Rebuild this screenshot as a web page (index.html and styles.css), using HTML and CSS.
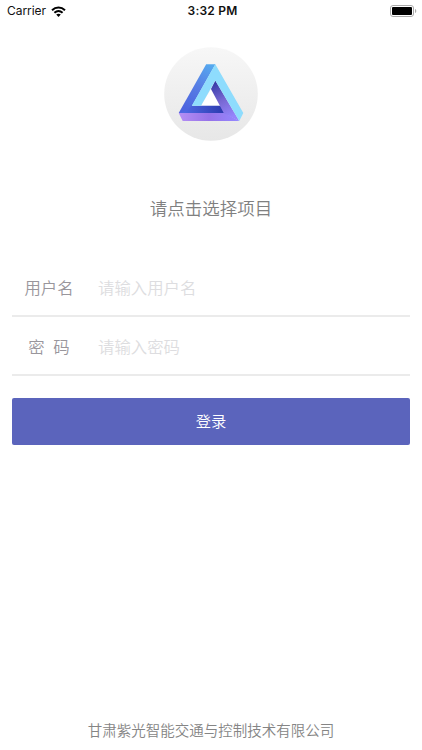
FILE: index.html
```html
<!DOCTYPE html>
<html lang="zh-CN">
<head>
<meta charset="utf-8">
<meta name="viewport" content="width=device-width, initial-scale=1">
<title>登录</title>
<link rel="stylesheet" href="styles.css">
</head>
<body>
<div class="screen">
  <header class="status">
    <div class="carrier"><span>Carrier</span>
      <svg class="wifi" width="15" height="11" viewBox="0 0 15 11" fill="none" stroke="#000" stroke-width="2">
        <path d="M1 4.2C4.8.6 10.2.6 14 4.2M3.4 6.8c2.5-2.2 5.7-2.2 8.2 0"/>
        <path d="M5.2 8.6c1.4-1.1 3.2-1.1 4.6 0L7.5 11z" fill="#000" stroke="none"/>
      </svg>
    </div>
    <time class="time">3:32 PM</time>
    <svg class="battery" width="27" height="12" viewBox="0 0 27 12">
      <rect x=".5" y=".5" width="23" height="11" rx="2.5" fill="#fff" stroke="#aaa"/>
      <rect x="2" y="2" width="20" height="8" rx="1" fill="#000"/>
      <path d="M25 4c1.7.5 1.7 3.500 0 4z" fill="#aaa"/>
    </svg>
  </header>
  <svg class="logo" width="94" height="94" viewBox="0 0 94 94">
    <defs>
      <linearGradient id="disc" x2="0" y2="1"><stop stop-color="#f7f7f7"/><stop offset="1" stop-color="#e7e7e7"/></linearGradient>
      <linearGradient id="left" gradientUnits="userSpaceOnUse" x1="48" y1="17" x2="23" y2="62"><stop stop-color="#55abef"/><stop offset=".5" stop-color="#587fe5"/><stop offset="1" stop-color="#4c64df"/></linearGradient>
      <linearGradient id="bar" gradientUnits="userSpaceOnUse" x1="20" y1="62" x2="60" y2="62"><stop stop-color="#4e68e3"/><stop offset="1" stop-color="#2c3aae"/></linearGradient>
      <linearGradient id="base" gradientUnits="userSpaceOnUse" x1="15" y1="70" x2="75" y2="70"><stop stop-color="#b58ff4"/><stop offset=".5" stop-color="#9672e8"/><stop offset="1" stop-color="#9488ff"/></linearGradient>
      <linearGradient id="inner" gradientUnits="userSpaceOnUse" x1="50" y1="36" x2="67" y2="70"><stop stop-color="#363ba8"/><stop offset=".5" stop-color="#7767d2"/><stop offset="1" stop-color="#9585fb"/></linearGradient>
    </defs>
    <circle cx="47" cy="47" r="46.800" fill="url(#disc)"/>
    <path d="M47 42L37 58.700h19.500z" fill="#fff"/>
    <path d="M42.200 17.300h9.200L28 58.700 23 66h-8.300z" fill="url(#left)"/>
    <path d="M27.500 58.700h29l4 7.500H14.700l8-3z" fill="url(#bar)"/>
    <path d="M14.700 66h46l14.600 8H18.700z" fill="url(#base)"/>
    <path d="M51.300 33.500L75.300 74 60 66.500 47 42z" fill="url(#inner)"/>
    <path d="M51.300 17.300L79.300 66l-4 8-24-40.500L37 58.700h-9.200z" fill="#8edcfd"/>
  </svg>
  <h1 class="project">请点击选择项目</h1>
  <form class="form">
    <label class="row"><span class="label">用户名</span><input class="input" type="text" placeholder="请输入用户名"></label>
    <label class="row"><span class="label spaced">密&nbsp; 码</span><input class="input" type="password" placeholder="请输入密码"></label>
    <button class="login" type="button">登录</button>
  </form>
  <footer class="footer">甘肃紫光智能交通与控制技术有限公司</footer>
</div>
</body>
</html>
```
FILE: styles.css
```css
* { box-sizing: border-box; }
body { margin: 0; background: #fff; }
.screen {
  display: flex;
  flex-direction: column;
  align-items: center;
  width: 422px;
  height: 750px;
  overflow: hidden;
  font-family: "Noto Sans CJK SC", sans-serif;
  font-weight: 350;
}
.status {
  display: grid;
  grid-template-columns: 1fr auto 1fr;
  align-items: center;
  width: 100%;
  height: 22px;
  padding: 0 5px 0 7px;
  font: 400 12px/22px Inter, sans-serif;
  color: #111;
}
.carrier { display: flex; align-items: center; gap: 5px; letter-spacing: -0.05px; }
.time { padding-left: 1px; font-weight: 600; letter-spacing: 0.2px; }
.battery { justify-self: end; }
.logo { margin-top: 25px; flex: none; }
.project {
  margin: 54px 0 0;
  font-size: 17.5px;
  font-weight: 350;
  line-height: 26px;
  color: #808080;
}
.form { width: 398px; margin-top: 37px; }
.row {
  display: flex;
  align-items: center;
  height: 59px;
  border-bottom: 2px solid #ebebeb;
}
.label { width: 74px; text-align: center; font-size: 16.4px; color: #99969c; }
.spaced { word-spacing: 0.6px; }
.input {
  flex: 1;
  min-width: 0;
  margin-left: 12px;
  padding: 0;
  border: 0;
  outline: 0;
  background: none;
  font: inherit;
  font-size: 16.4px;
}
.input::placeholder { color: #dddde0; opacity: 1; }
.login {
  display: block;
  width: 100%;
  height: 47px;
  margin-top: 22px;
  padding: 0 0 3px;
  border: 0;
  border-radius: 2px;
  background: #5b64bc;
  color: #fff;
  font: inherit;
  font-size: 15.3px;
}
.footer { margin-top: auto; padding-bottom: 9px; font-size: 14.5px; line-height: 22px; color: #858585; }
```
